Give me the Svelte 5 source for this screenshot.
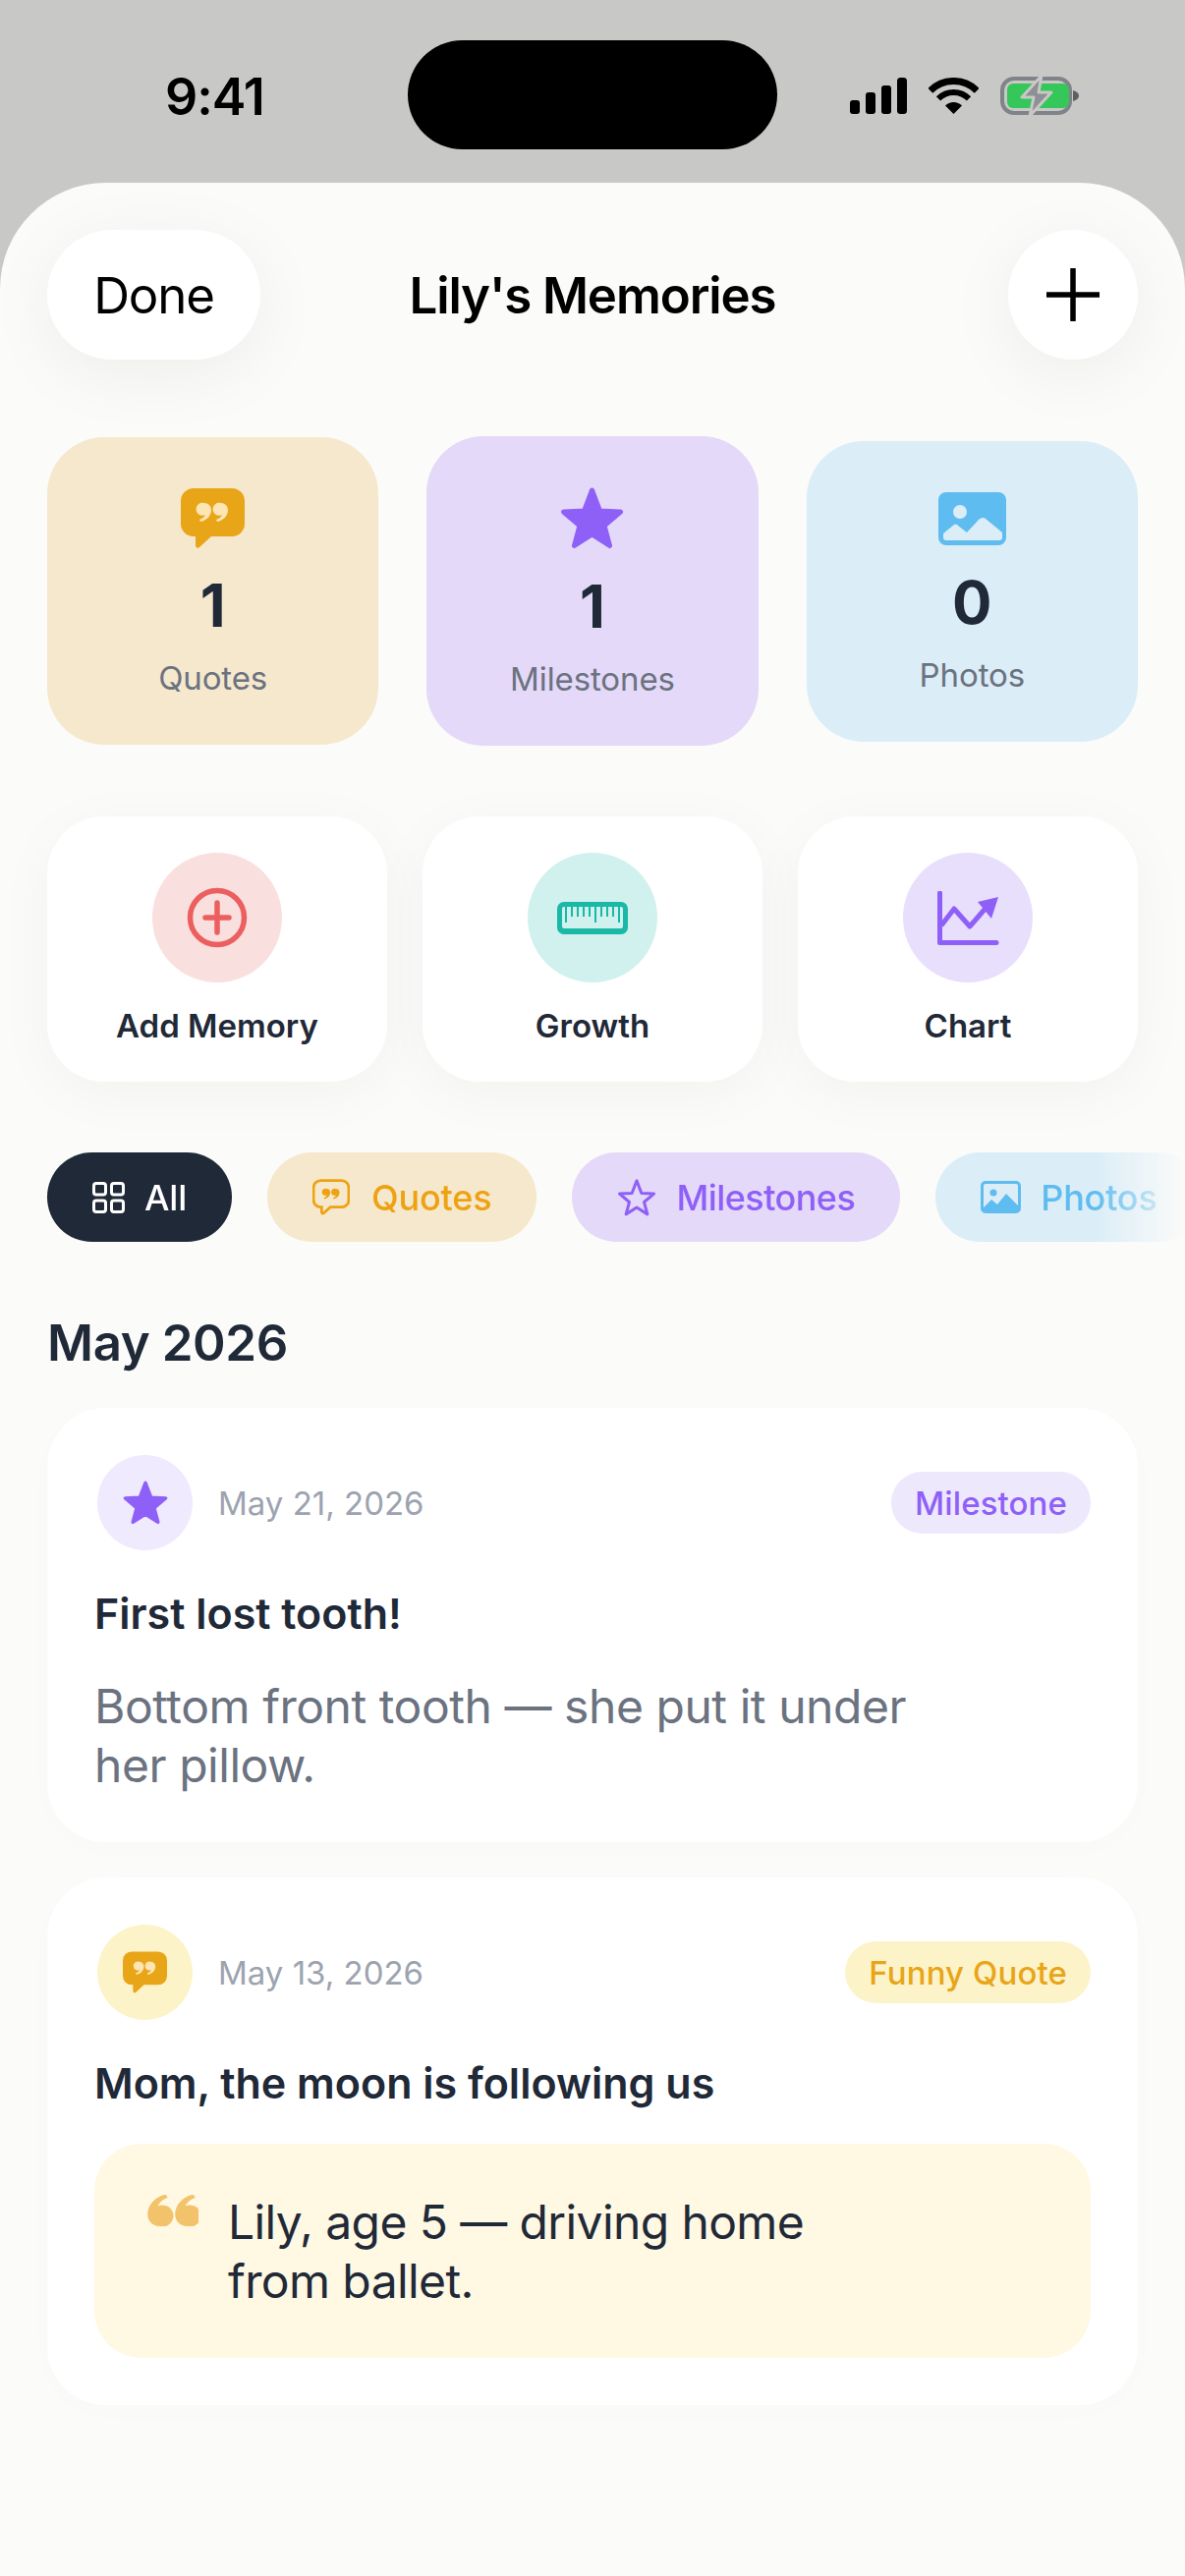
<script>
  const stats = [
    { kind: 'quote', count: 1, label: 'Quotes', tone: 'amber' },
    { kind: 'star', count: 1, label: 'Milestones', tone: 'violet' },
    { kind: 'photo', count: 0, label: 'Photos', tone: 'sky' }
  ];
  const rulerTicks = [9, 15, 21, 27, 33, 39, 45, 51, 57, 63];
  const glyph = 'M7 0a7 7 0 0 1 7 7c0 6-5 11-11 12l-1-2c3-1 5-3 6-5a6.5 6.5 0 1 1-1-12z';
  const starPoints = '32.5,3 24.5,24 3.5,25 20,39 14.5,59.5 32.5,48 50.5,59.5 45,39 61.5,25 40.5,24';
  const bubble = 'M13 0h39a13 13 0 0 1 13 13v23a13 13 0 0 1-13 13H31L19 60c-2 1.5-4 .5-4-2v-9h-2A13 13 0 0 1 0 36V13A13 13 0 0 1 13 0z';
</script>

{#snippet quoteIcon(width, height)}
  <svg {width} {height} viewBox="0 0 65 61">
    <path d={bubble} fill="#e9a518" />
    <path d={glyph} transform="translate(17 15)" fill="#fbe6b4" />
    <path d={glyph} transform="translate(34 15)" fill="#fbe6b4" />
  </svg>
{/snippet}

{#snippet starIcon(width, height)}
  <svg {width} {height} viewBox="0 0 65 63">
    <polygon points={starPoints} fill="#8f60f8" stroke="#8f60f8" stroke-width="5" stroke-linejoin="round" />
  </svg>
{/snippet}

<div class="phone">
  <div class="status">
    <span class="time">9:41</span>
    <div class="island"></div>
    <div class="status-icons">
      <svg width="58" height="37" viewBox="0 0 58 37">
        <rect x="0" y="23" width="10" height="14" rx="3" />
        <rect x="16" y="15" width="10" height="22" rx="3" />
        <rect x="32" y="8" width="10" height="29" rx="3" />
        <rect x="48" y="0" width="10" height="37" rx="3.5" />
      </svg>
      <svg width="51" height="37" viewBox="0 0 51 37">
        <path d="M25.5 37 L17 28.500 A12 12 0 0 1 34 28.500 Z" />
        <path d="M9.950 21.450 A22 22 0 0 1 41.050 21.450" fill="none" stroke="#000" stroke-width="6" />
        <path d="M1.800 13.300 A33.500 33.500 0 0 1 49.200 13.300" fill="none" stroke="#000" stroke-width="7" />
      </svg>
      <svg width="84" height="43" viewBox="0 0 84 43">
        <rect x="2" y="4" width="69" height="35" rx="12" fill="none" stroke="#808388" stroke-width="4" />
        <rect x="7" y="9" width="63" height="25" rx="6" fill="#35c759" />
        <path d="M74 16c4 1 6 3 6 5.500s-2 4.500-6 5.500z" fill="#5d6064" />
        <path d="M42 1 L22 23 H34 L30 42 L52 18 H39 Z" fill="#8d9094" stroke="#c8c8c6" stroke-width="3" stroke-linejoin="round" />
      </svg>
    </div>
  </div>

  <main class="sheet">
    <header class="topbar">
      <button class="done">Done</button>
      <h1>Lily's Memories</h1>
      <button class="add" aria-label="Add">
        <svg width="54" height="54" viewBox="0 0 54 54">
          <path d="M27 1v52M1 27h52" stroke="#000" stroke-width="5.500" stroke-linecap="round" />
        </svg>
      </button>
    </header>

    <section class="stats">
      {#each stats as stat}
        <div class="stat {stat.tone}">
          {#if stat.kind === 'quote'}
            {@render quoteIcon(65, 61)}
          {:else if stat.kind === 'star'}
            {@render starIcon(65, 63)}
          {:else}
            <svg width="69" height="54" viewBox="0 0 69 54">
              <rect width="69" height="54" rx="8" fill="#5fbcf0" />
              <circle cx="22" cy="20" r="7" fill="#dbedf7" />
              <path d="M8 49q-3 0-3-3v-4l11-9q3-1 4 1l9 7 13-14q4-2 6 0l17 14v5q0 3-3 3z" fill="#dbedf7" />
            </svg>
          {/if}
          <strong>{stat.count}</strong>
          <span>{stat.label}</span>
        </div>
      {/each}
    </section>

    <section class="actions">
      <button class="action">
        <span class="action-icon rose">
          <svg width="64" height="64" viewBox="0 0 64 64">
            <circle cx="32" cy="32" r="27.500" fill="none" stroke="#ec5f5f" stroke-width="5.500" />
            <path d="M32 17v30M20 32h24" stroke="#ec5f5f" stroke-width="5.500" stroke-linecap="round" />
          </svg>
        </span>
        Add Memory
      </button>
      <button class="action">
        <span class="action-icon teal">
          <svg width="72" height="33" viewBox="0 0 72 33">
            <rect width="72" height="33" rx="7" fill="#1ab8a6" />
            <rect x="5" y="5" width="62" height="22" rx="2" fill="#d0f1ed" />
            {#each rulerTicks as x, i}
              <rect x={x - 1} y="5" width="2" height={i === 0 || i === 5 || i === 9 ? 16 : 10} fill="#1ab8a6" />
            {/each}
          </svg>
        </span>
        Growth
      </button>
      <button class="action">
        <span class="action-icon lilac">
          <svg width="63" height="55" viewBox="0 0 63 55">
            <path d="M2.500 2v50.500H60" fill="none" stroke="#8f60f8" stroke-width="5" stroke-linecap="round" stroke-linejoin="round" />
            <path d="M4 35 17 18 33 36 52 14" fill="none" stroke="#8f60f8" stroke-width="5" stroke-linejoin="round" />
            <path d="M62 6 41 11 55 28z" fill="#8f60f8" />
          </svg>
        </span>
        Chart
      </button>
    </section>

    <nav class="filters">
      <button class="filter dark">
        <svg width="33" height="32" viewBox="0 0 33 32" fill="none" stroke="#fff" stroke-width="3">
          <rect x="1.500" y="1.500" width="12" height="11.500" rx="2.500" />
          <rect x="19.500" y="1.500" width="12" height="11.500" rx="2.500" />
          <rect x="1.500" y="19" width="12" height="11.500" rx="2.500" />
          <rect x="19.500" y="19" width="12" height="11.500" rx="2.500" />
        </svg>
        All
      </button>
      <button class="filter amber">
        <svg class="wide-gap" width="38" height="37" viewBox="-2 -2 69 65">
          <path d={bubble} fill="none" stroke="#eea213" stroke-width="5" />
          <path d={glyph} transform="translate(17 15)" fill="#eea213" />
          <path d={glyph} transform="translate(34 15)" fill="#eea213" />
        </svg>
        Quotes
      </button>
      <button class="filter violet">
        <svg width="40" height="38" viewBox="0 0 65 63">
          <polygon points={starPoints} fill="none" stroke="#8f60f8" stroke-width="5" stroke-linejoin="round" />
        </svg>
        Milestones
      </button>
      <button class="filter sky">
        <svg width="41" height="33" viewBox="0 0 41 33">
          <rect x="1.500" y="1.500" width="38" height="30" rx="3.500" fill="none" stroke="#5fbcf0" stroke-width="3" />
          <circle cx="13" cy="12" r="3.500" fill="#5fbcf0" />
          <path d="M2 28 11 19l6 5 9-11 13 13v4a2 2 0 0 1-2 2H4a2 2 0 0 1-2-2z" fill="#5fbcf0" />
        </svg>
        Photos
      </button>
    </nav>

    <h2>May 2026</h2>

    <section class="feed">
      <article class="memory">
        <div class="memory-head">
          <span class="memory-icon violet-soft">{@render starIcon(46, 45)}</span>
          <time>May 21, 2026</time>
          <span class="badge badge-violet">Milestone</span>
        </div>
        <h3>First lost tooth!</h3>
        <p class="body">Bottom front tooth — she put it under<br />her pillow.</p>
      </article>

      <article class="memory">
        <div class="memory-head">
          <span class="memory-icon amber-soft">{@render quoteIcon(45, 43)}</span>
          <time>May 13, 2026</time>
          <span class="badge badge-amber">Funny Quote</span>
        </div>
        <h3>Mom, the moon is following us</h3>
        <blockquote>
          <svg width="52" height="32" viewBox="0 0 52 32">
            <path d={glyph} transform="translate(24 32) rotate(180) scale(1.7)" fill="#f3c36b" />
            <path d={glyph} transform="translate(52 32) rotate(180) scale(1.7)" fill="#f3c36b" />
          </svg>
          <p>Lily, age 5 — driving home<br />from ballet.</p>
        </blockquote>
      </article>
    </section>
  </main>
</div>

<style>
  :global(body) {
    margin: 0;
    background: #fbfbf9;
    font-family: Inter, "Liberation Sans", sans-serif;
  }

  button {
    font: inherit;
    border: none;
    cursor: pointer;
  }

  .phone {
    width: 1206px;
    height: 2622px;
    overflow: hidden;
    background: #c8c8c6;
    display: flex;
    flex-direction: column;
  }

  .status {
    position: relative;
    height: 186px;
    flex: none;
    box-sizing: border-box;
    padding: 0 104px 0 168px;
    display: flex;
    align-items: center;
    justify-content: space-between;
  }

  .time {
    font-size: 52px;
    font-weight: 600;
    color: #000;
    margin-top: 10px;
    letter-spacing: -1px;
  }

  .island {
    position: absolute;
    left: 415px;
    top: 41px;
    width: 376px;
    height: 111px;
    border-radius: 56px;
    background: #000;
  }

  .status-icons {
    display: flex;
    align-items: center;
    gap: 22px;
    margin-top: 8px;
  }

  .sheet {
    flex: 1;
    background: #fbfbf9;
    border-radius: 108px 108px 0 0;
    padding: 48px 48px 0;
  }

  .topbar {
    position: relative;
    z-index: 1;
    display: grid;
    grid-template-columns: 1fr auto 1fr;
    align-items: center;
    height: 132px;
  }

  .topbar h1 {
    margin: 0;
    font-size: 51px;
    font-weight: 600;
    letter-spacing: -1.1px;
    color: #000;
  }

  .done,
  .add {
    height: 132px;
    border-radius: 66px;
    background: #fff;
    color: #000;
    box-shadow: 0 14px 72px rgba(0, 0, 0, 0.06);
  }

  .done {
    width: 217px;
    font-size: 51px;
    letter-spacing: -1.2px;
  }

  .add {
    width: 132px;
    justify-self: end;
    display: flex;
    align-items: center;
    justify-content: center;
  }

  .stats {
    margin-top: 78px;
    height: 315px;
    display: grid;
    grid-template-columns: repeat(3, 1fr);
    gap: 49px;
    align-items: center;
  }

  .stat {
    display: flex;
    flex-direction: column;
    align-items: center;
    padding: 52px 0 48px;
    border-radius: 58px;
  }

  .stat strong {
    margin-top: 22px;
    font-size: 60px;
    line-height: 72px;
    font-weight: 700;
    color: #1f2937;
  }

  .stat span {
    margin-top: 18px;
    font-size: 33px;
    line-height: 40px;
    letter-spacing: -0.1px;
    color: #6b7280;
  }

  .amber {
    background: #f6e8cc;
  }

  .violet {
    background: #e4d9f8;
  }

  .sky {
    background: #dbedf7;
  }

  .actions {
    margin-top: 72px;
    display: grid;
    grid-template-columns: repeat(3, 1fr);
    gap: 36px;
  }

  .action {
    height: 270px;
    border-radius: 58px;
    background: #fff;
    box-shadow: 0 12px 60px rgba(0, 0, 0, 0.04);
    display: flex;
    flex-direction: column;
    align-items: center;
    padding: 37px 0 0;
    font-size: 33px;
    font-weight: 600;
    color: #1f2937;
    gap: 24px;
  }

  .action-icon {
    width: 132px;
    height: 132px;
    border-radius: 50%;
    display: flex;
    align-items: center;
    justify-content: center;
  }

  .rose {
    background: #fadfdf;
  }

  .teal {
    background: #d0f1ed;
  }

  .lilac {
    background: #e7dffc;
  }

  .filters {
    margin: 72px -48px 0;
    padding-left: 48px;
    display: flex;
    gap: 36px;
    overflow: hidden;
    -webkit-mask-image: linear-gradient(to right, #000 1115px, transparent 1206px);
    mask-image: linear-gradient(to right, #000 1115px, transparent 1206px);
  }

  .filter {
    flex: none;
    height: 91px;
    border-radius: 46px;
    padding: 0 46px;
    display: flex;
    align-items: center;
    gap: 20px;
    font-size: 36px;
    font-weight: 500;
    letter-spacing: -0.2px;
  }

  .wide-gap {
    margin-right: 2px;
  }

  .filter.dark {
    background: #1f2937;
    color: #fff;
  }

  .filter.amber {
    color: #eea213;
  }

  .filter.violet {
    color: #8f60f8;
    letter-spacing: -0.55px;
  }

  .filter.sky {
    color: #5fbcf0;
  }

  h2 {
    margin: 73px 0 36px;
    font-size: 51px;
    line-height: 60px;
    font-weight: 600;
    letter-spacing: -0.4px;
    color: #1f2937;
  }

  .feed {
    display: flex;
    flex-direction: column;
    gap: 36px;
  }

  .memory {
    background: #fff;
    border-radius: 60px;
    padding: 48px;
    box-shadow: 0 6px 40px rgba(0, 0, 0, 0.01);
  }

  .memory-head {
    display: flex;
    align-items: center;
    height: 97px;
  }

  .memory-icon {
    width: 97px;
    height: 97px;
    margin-left: 3px;
    border-radius: 50%;
    display: flex;
    align-items: center;
    justify-content: center;
  }

  .violet-soft {
    background: #efeafd;
  }

  .amber-soft {
    background: #fdf3c9;
  }

  time {
    margin-left: 26px;
    font-size: 33px;
    color: #9ca3af;
  }

  .badge {
    margin-left: auto;
    height: 63px;
    border-radius: 32px;
    padding: 0 24px;
    display: flex;
    align-items: center;
    font-size: 33px;
    font-weight: 500;
    letter-spacing: 0.1px;
  }

  .badge-violet {
    background: #eee8fd;
    color: #8f60f8;
  }

  .badge-amber {
    background: #fdf3c9;
    color: #e9a518;
  }

  h3 {
    margin: 39px 0 0;
    font-size: 43px;
    line-height: 50px;
    font-weight: 600;
    color: #1f2937;
  }

  .body {
    margin: 40px 0 0;
    font-size: 48px;
    line-height: 60px;
    letter-spacing: -0.45px;
    color: #6b7280;
  }

  blockquote {
    margin: 37px 0 0;
    height: 218px;
    box-sizing: border-box;
    padding: 50px 54px 0;
    border-radius: 48px;
    background: #fff8e3;
    display: flex;
    align-items: flex-start;
    gap: 30px;
  }

  blockquote svg {
    margin-top: 2px;
  }

  blockquote p {
    margin: 0;
    font-size: 48px;
    line-height: 60px;
    letter-spacing: -0.6px;
    color: #1f2937;
  }
</style>
